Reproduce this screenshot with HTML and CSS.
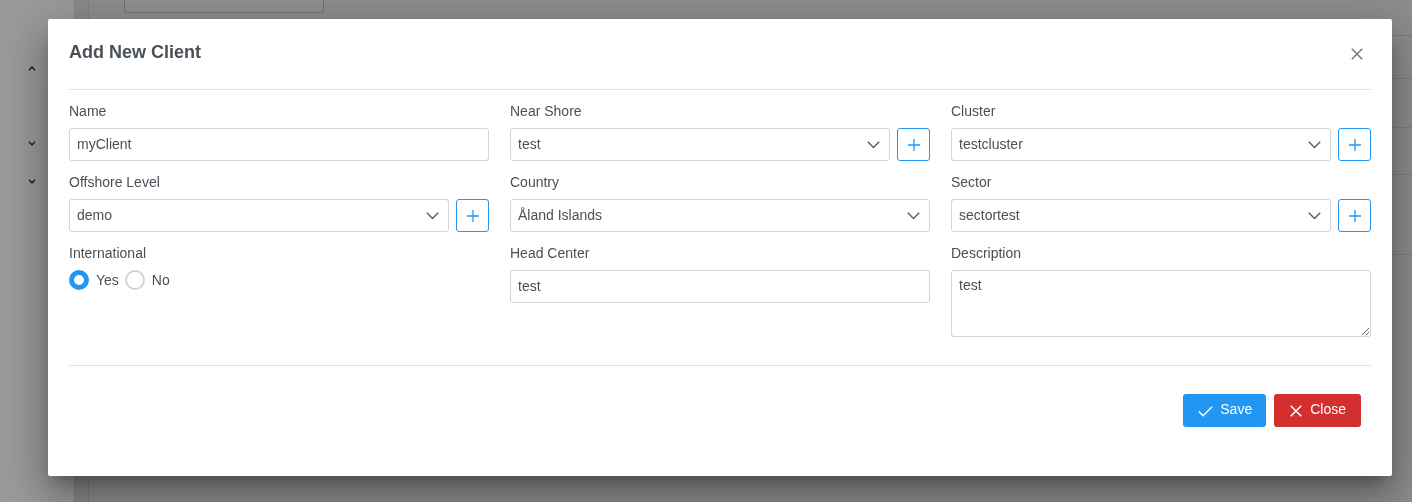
FILE: index.html
```html
<!DOCTYPE html>
<html lang="en">
<head>
<meta charset="utf-8">
<title>Add New Client</title>
<link rel="stylesheet" href="styles.css">
</head>
<body>
<div class="page">
  <aside class="sidebar">
    <div class="side-item"><svg class="side-chev" viewBox="0 0 8 5" width="8" height="5"><path d="M1 4.2 L4 1 L7 4.2" fill="none" stroke="#333" stroke-width="1.4"/></svg></div>
    <div class="side-item side-gap"><svg class="side-chev" viewBox="0 0 8 5" width="8" height="5"><path d="M1 0.8 L4 4 L7 0.8" fill="none" stroke="#333" stroke-width="1.4"/></svg></div>
    <div class="side-item"><svg class="side-chev" viewBox="0 0 8 5" width="8" height="5"><path d="M1 0.8 L4 4 L7 0.8" fill="none" stroke="#333" stroke-width="1.4"/></svg></div>
  </aside>
  <main class="main">
    <div class="card">
      <div class="card-top"><div class="bg-input"></div></div>
      <div class="trow r1"></div>
      <div class="trow r2"></div>
      <div class="trow r3"></div>
      <div class="trow r4"></div>
      <div class="trow r5"></div>
    </div>
  </main>
</div>

<div class="overlay">
  <div class="modal">
    <div class="modal-header">
      <h2 class="modal-title">Add New Client</h2>
      <button class="close-x" type="button" aria-label="Close">
        <svg viewBox="0 0 12 12" width="12" height="12"><path d="M0.8 0.8 L11.2 11.2 M11.2 0.8 L0.8 11.2" stroke="#6c757d" stroke-width="1.4" fill="none"/></svg>
      </button>
    </div>

    <div class="modal-body">
      <div class="col">
        <div class="field">
          <label class="label">Name</label>
          <input class="input" type="text" value="myClient">
        </div>
        <div class="field">
          <label class="label">Offshore Level</label>
          <div class="with-add">
            <div class="select"><span class="select-text">demo</span>
              <svg class="chev" viewBox="0 0 13 8" width="13" height="8"><path d="M0.8 0.8 L6.5 6.6 L12.2 0.8" fill="none" stroke="#555c63" stroke-width="1.4"/></svg></div>
            <button class="add-btn" type="button"><svg viewBox="0 0 12 12" width="12" height="12"><path d="M6 0 V12 M0 6 H12" stroke="#2196f3" stroke-width="1.3" fill="none"/></svg></button>
          </div>
        </div>
        <div class="field">
          <label class="label">International</label>
          <div class="radios">
            <span class="radio radio-on"></span><span class="radio-label">Yes</span>
            <span class="radio"></span><span class="radio-label">No</span>
          </div>
        </div>
      </div>

      <div class="col">
        <div class="field">
          <label class="label">Near Shore</label>
          <div class="with-add">
            <div class="select"><span class="select-text">test</span>
              <svg class="chev" viewBox="0 0 13 8" width="13" height="8"><path d="M0.8 0.8 L6.5 6.6 L12.2 0.8" fill="none" stroke="#555c63" stroke-width="1.4"/></svg></div>
            <button class="add-btn" type="button"><svg viewBox="0 0 12 12" width="12" height="12"><path d="M6 0 V12 M0 6 H12" stroke="#2196f3" stroke-width="1.3" fill="none"/></svg></button>
          </div>
        </div>
        <div class="field">
          <label class="label">Country</label>
          <div class="select"><span class="select-text">Åland Islands</span>
            <svg class="chev" viewBox="0 0 13 8" width="13" height="8"><path d="M0.8 0.8 L6.5 6.6 L12.2 0.8" fill="none" stroke="#555c63" stroke-width="1.4"/></svg></div>
        </div>
        <div class="field">
          <label class="label">Head Center</label>
          <input class="input" type="text" value="test">
        </div>
      </div>

      <div class="col">
        <div class="field">
          <label class="label">Cluster</label>
          <div class="with-add">
            <div class="select"><span class="select-text">testcluster</span>
              <svg class="chev" viewBox="0 0 13 8" width="13" height="8"><path d="M0.8 0.8 L6.5 6.6 L12.2 0.8" fill="none" stroke="#555c63" stroke-width="1.4"/></svg></div>
            <button class="add-btn" type="button"><svg viewBox="0 0 12 12" width="12" height="12"><path d="M6 0 V12 M0 6 H12" stroke="#2196f3" stroke-width="1.3" fill="none"/></svg></button>
          </div>
        </div>
        <div class="field">
          <label class="label">Sector</label>
          <div class="with-add">
            <div class="select"><span class="select-text">sectortest</span>
              <svg class="chev" viewBox="0 0 13 8" width="13" height="8"><path d="M0.8 0.8 L6.5 6.6 L12.2 0.8" fill="none" stroke="#555c63" stroke-width="1.4"/></svg></div>
            <button class="add-btn" type="button"><svg viewBox="0 0 12 12" width="12" height="12"><path d="M6 0 V12 M0 6 H12" stroke="#2196f3" stroke-width="1.3" fill="none"/></svg></button>
          </div>
        </div>
        <div class="field">
          <label class="label">Description</label>
          <textarea class="textarea">test</textarea>
        </div>
      </div>
    </div>

    <div class="modal-footer">
      <button class="btn btn-save" type="button">
        <svg viewBox="0 0 15 11" width="15" height="11"><path d="M0.8 5.6 L5 9.8 L14.2 0.8" fill="none" stroke="#fff" stroke-width="1.4"/></svg>
        <span>Save</span>
      </button>
      <button class="btn btn-close" type="button">
        <svg viewBox="0 0 12 12" width="12" height="12"><path d="M0.7 0.7 L11.3 11.3 M11.3 0.7 L0.7 11.3" fill="none" stroke="#fff" stroke-width="1.5"/></svg>
        <span>Close</span>
      </button>
    </div>
  </div>
</div>
</body>
</html>
```

FILE: styles.css
```css
* { box-sizing: border-box; }

html, body {
  margin: 0;
  padding: 0;
  height: 100%;
  overflow: hidden;
  font-family: "Liberation Sans", Arial, Helvetica, sans-serif;
  font-size: 14px;
  color: #495057;
}

/* ---------- underlying page ---------- */
.page {
  display: flex;
  height: 502px;
  background: #e3e5e8;
}

.sidebar {
  width: 75px;
  flex: none;
  background: #ffffff;
  border-right: 1px solid #d8dbe0;
  padding-top: 49px;
  display: flex;
  flex-direction: column;
}

.side-item {
  height: 38px;
  display: flex;
  align-items: center;
  justify-content: center;
  padding-right: 10px;
}

.side-gap { margin-top: 37px; }

.main {
  flex: 1;
  padding-left: 13px;
}

.card {
  background: #e9ebee;
  border-left: 1px solid #cfd3d8;
  height: 100%;
  display: flex;
  flex-direction: column;
}

.card-top {
  height: 35px;
  padding-left: 35px;
}

.bg-input {
  width: 200px;
  height: 13px;
  border: 1px solid #b9bec5;
  border-top: none;
  border-radius: 0 0 4px 4px;
  background: #eeeff1;
}

.trow { border-top: 1px solid #d0d4d9; }
.r1 { height: 43px; }
.r2 { height: 49px; }
.r3 { height: 47px; }
.r4 { height: 80px; }
.r5 { flex: 1; }

/* ---------- overlay + modal ---------- */
.overlay {
  position: fixed;
  inset: 0;
  background: rgba(0, 0, 0, 0.4);
  padding-top: 19px;
  padding-left: 48px;
}

.modal {
  width: 1344px;
  background: #ffffff;
  border-radius: 2px;
  padding: 0 21px;
  box-shadow: 0 11px 15px -7px rgba(0,0,0,0.28),
              0 24px 38px 3px rgba(0,0,0,0.2),
              0 9px 46px 8px rgba(0,0,0,0.16);
}

.modal-header {
  display: flex;
  align-items: flex-start;
  justify-content: space-between;
  padding: 22px 0 26px;
  border-bottom: 1px solid #dee2e6;
}

.modal-title {
  margin: 0;
  font-size: 18px;
  line-height: 22px;
  font-weight: 700;
  color: #495057;
}

.close-x {
  width: 28px;
  height: 18px;
  padding: 0;
  margin-top: 4px;
  border: none;
  background: transparent;
  display: flex;
  align-items: center;
  justify-content: center;
}

.modal-body {
  display: grid;
  grid-template-columns: repeat(3, 1fr);
  column-gap: 21px;
  padding: 11px 0 17px;
}

.col {
  display: flex;
  flex-direction: column;
}

.field {
  display: flex;
  flex-direction: column;
  margin-bottom: 11px;
}

.label {
  font-size: 14px;
  line-height: 21px;
  margin-bottom: 6px;
  color: #495057;
}

.input,
.select,
.textarea {
  font-family: "Liberation Sans", Arial, Helvetica, sans-serif;
  font-size: 14px;
  color: #495057;
  border: 1px solid #ced4da;
  border-radius: 3px;
  background: #ffffff;
}

.input {
  height: 33px;
  padding: 0 7px 2px;
  width: 100%;
  outline: none;
}

.select {
  height: 33px;
  padding: 0 9px 0 7px;
  display: flex;
  align-items: center;
  justify-content: space-between;
  min-width: 0;
}

.with-add .select { flex: 1; }

.select-text { line-height: 21px; margin-top: -1px; }

.chev { flex: none; }

.with-add {
  display: flex;
  gap: 7px;
}

.add-btn {
  width: 33px;
  height: 33px;
  flex: none;
  padding: 0;
  border: 1px solid #2196f3;
  border-radius: 3px;
  background: #ffffff;
  display: flex;
  align-items: center;
  justify-content: center;
}

.textarea {
  height: 67px;
  padding: 4px 7px;
  line-height: 21px;
  resize: vertical;
  width: 100%;
  outline: none;
  display: block;
}

.radios {
  display: flex;
  align-items: center;
  height: 20px;
}

.radio {
  width: 20px;
  height: 20px;
  border-radius: 50%;
  border: 2px solid #ced4da;
  background: #ffffff;
  flex: none;
}

.radio-on { border: 5px solid #2196f3; }

.radio-label {
  margin: 0 6px 0 7px;
  line-height: 20px;
  color: #495057;
}

.modal-footer {
  border-top: 1px solid #dee2e6;
  padding: 28px 10px 49px 0;
  display: flex;
  justify-content: flex-end;
  gap: 8px;
}

.btn {
  height: 33px;
  border: none;
  border-radius: 3px;
  color: #ffffff;
  font-family: "Liberation Sans", Arial, Helvetica, sans-serif;
  font-size: 14px;
  line-height: 21px;
  display: flex;
  align-items: center;
  padding: 0 15px;
  gap: 7px;
}

.btn span { margin-top: -2px; }

.btn-save { background: #2196f3; gap: 7px; padding: 0 14px 0 15px; }
.btn-save svg { margin-top: 2px; }

.btn-close { background: #d32f2f; padding: 0 15px 0 16px; gap: 8px; }
```
